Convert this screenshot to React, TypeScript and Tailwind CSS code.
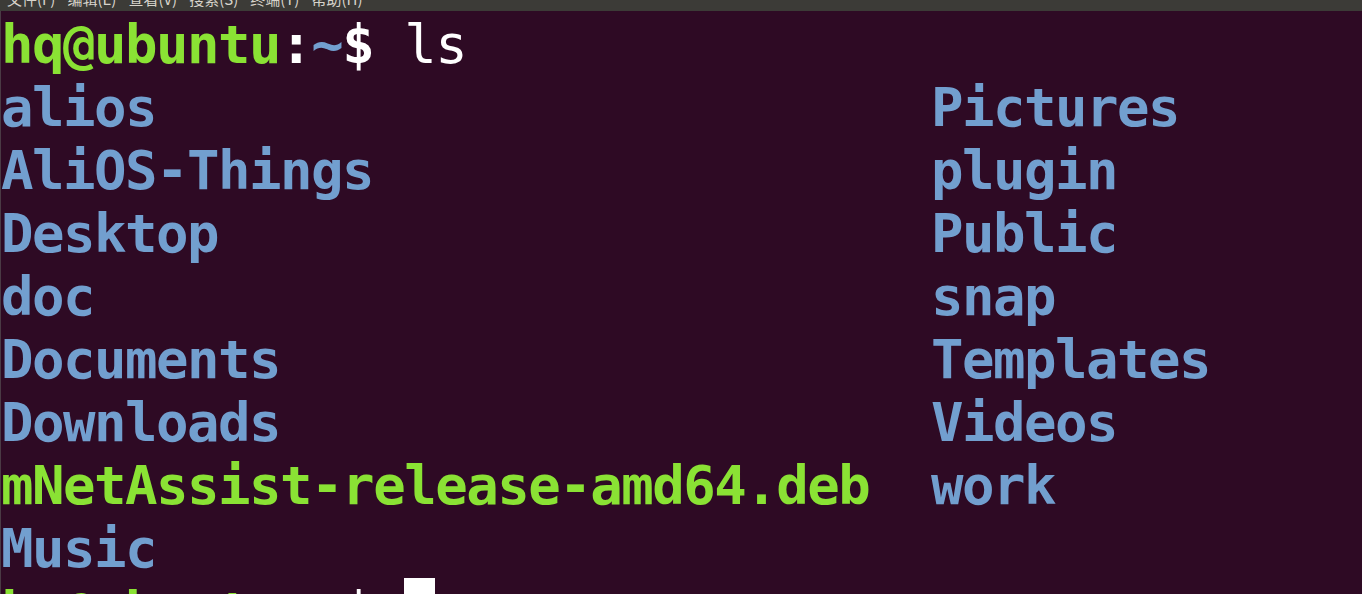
const rows: [string, string, string][] = [
  ['alios', 'blue', 'Pictures'],
  ['AliOS-Things', 'blue', 'plugin'],
  ['Desktop', 'blue', 'Public'],
  ['doc', 'blue', 'snap'],
  ['Documents', 'blue', 'Templates'],
  ['Downloads', 'blue', 'Videos'],
  ['mNetAssist-release-amd64.deb', 'green', 'work'],
  ['Music', 'blue', ''],
];

const menus = ['文件(F)', '编辑(E)', '查看(V)', '搜索(S)', '终端(T)', '帮助(H)'];

const Prompt = ({ children }: { children?: React.ReactNode }) => (
  <div className="h-[63px] whitespace-pre">
    <span className="text-[#8ae234]">hq@ubuntu</span>
    <span className="text-[#ffffff]">:</span>
    <span className="text-[#729fcf]">~</span>
    <span className="text-[#ffffff]">$ </span>
    {children}
  </div>
);

const App = () => {
  return (
    <div className="h-[594px] w-[1362px] overflow-hidden bg-[#2e0a24] flex flex-col">
      {/* menu bar, mostly scrolled off the top */}
      <div className="h-[11px] shrink-0 bg-[#3c3b37] overflow-hidden flex gap-[12px] pl-[7px] text-[#d7d3cb] text-[15px] leading-[15px] font-['Noto_Sans_CJK_SC','Noto_Sans',sans-serif]">
        {menus.map((m) => (
          <span key={m} className="-mt-[9px]">{m}</span>
        ))}
      </div>

      {/* terminal */}
      <div className="flex-1 border-l border-[#4a3a44] pt-[2px] font-['DejaVu_Sans_Mono',monospace] font-bold text-[54px] leading-[63px] tracking-[-1.5px]">
        <Prompt>
          <span className="text-[#ffffff] font-normal">ls</span>
        </Prompt>
        {rows.map(([left, color, right]) => (
          <div key={left} className="grid grid-cols-[930px_1fr] h-[63px] whitespace-pre">
            <span className={color === 'green' ? 'text-[#8ae234]' : 'text-[#729fcf]'}>{left}</span>
            <span className="text-[#729fcf]">{right}</span>
          </div>
        ))}
        <Prompt>
          <span className="relative -top-[2px] inline-block align-top w-[31px] h-[63px] bg-[#ffffff]" />
        </Prompt>
      </div>
    </div>
  );
};

export default App;
